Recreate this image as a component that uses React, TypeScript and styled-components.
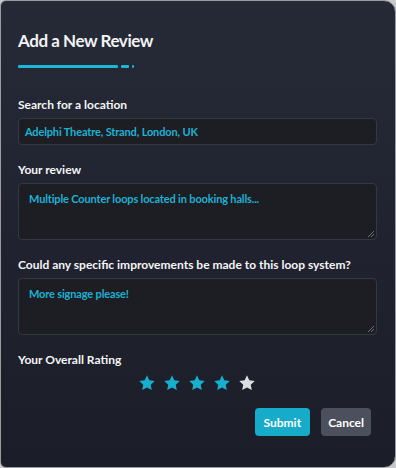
import React from "react";
import styled, { createGlobalStyle } from "styled-components";

const Global = createGlobalStyle`
  html, body { margin: 0; padding: 0; background: #c9cacc; }
  body { font-family: Lato, "Open Sans", sans-serif; }
  * { box-sizing: border-box; }
`;

const Card = styled.div`
  width: 396px;
  height: 468px;
  border: 1px solid #9a9ca1;
  border-radius: 6px 12px 12px 6px;
  background: linear-gradient(180deg, #262a37 0%, #1b1d28 100%);
  padding: 29px 18px 0 17px;
  display: flex;
  flex-direction: column;
  overflow: hidden;
`;

const Title = styled.h1`
  margin: 0;
  font-size: 17px;
  font-weight: 700;
  color: #f2f3f5;
  line-height: 22px;
  letter-spacing: -0.45px;
`;

const Divider = styled.div`
  display: flex;
  align-items: center;
  gap: 3px;
  margin: 13px 0 29px;
  height: 3px;
`;

const Seg = styled.span<{ $w: number }>`
  display: block;
  width: ${(p) => p.$w}px;
  height: 3px;
  border-radius: 1px;
  background: #1cb6d6;
`;

const Field = styled.div`
  display: flex;
  flex-direction: column;
  gap: 5px;
  margin-bottom: 17px;
`;

const Label = styled.label`
  font-size: 12px;
  font-weight: 700;
  color: #f4f5f7;
  line-height: 16px;
`;

const Input = styled.div`
  height: 27px;
  background: #1c1e24;
  border: 1px solid #343843;
  border-radius: 4px;
  padding: 0 6px;
  display: flex;
  align-items: center;
  font-size: 11px;
  font-weight: 700;
  color: #1eb1d2;
  letter-spacing: -0.15px;
`;

const Area = styled.div`
  position: relative;
  height: 57px;
  background: #1c1e24;
  border: 1px solid #343843;
  border-radius: 4px;
  padding: 7px 10px;
  font-size: 11px;
  font-weight: 700;
  color: #1eb1d2;
  line-height: 16px;
  letter-spacing: -0.15px;
`;

const Grip = styled.svg`
  position: absolute;
  right: 1px;
  bottom: 1px;
`;

const Stars = styled.div`
  display: flex;
  justify-content: center;
  gap: 7px;
  margin: 6px 0 0 -2px;
`;

const Actions = styled.div`
  display: flex;
  justify-content: flex-end;
  gap: 11px;
  margin: 16px 6px 0 0;
`;

const Button = styled.button<{ $primary?: boolean }>`
  height: 28px;
  padding: 0 ${(p) => (p.$primary ? 9 : 7)}px;
  border: none;
  border-radius: 4px;
  font-family: inherit;
  font-size: 12px;
  font-weight: 700;
  color: #ffffff;
  background: ${(p) => (p.$primary ? "#17abca" : "#4b505c")};
`;

const Star = ({ filled }: { filled: boolean }) => (
  <svg width="18" height="18" viewBox="0 0 24 24">
    <path
      d="M12 1.8l3.1 6.6 7.2.9-5.3 5 1.4 7.1L12 17.9l-6.4 3.5L7 14.3l-5.3-5 7.2-.9z"
      fill={filled ? "#16afcf" : "#dcdde0"}
    />
  </svg>
);

const ResizeGrip = () => (
  <Grip width="9" height="9" viewBox="0 0 9 9">
    <path d="M8 2L2 8M8 5L5 8" stroke="#6c707a" strokeWidth="1" />
  </Grip>
);

export default function App() {
  return (
    <>
      <Global />
      <Card>
        <Title>Add a New Review</Title>
        <Divider>
          <Seg $w={100} />
          <Seg $w={8} />
          <Seg $w={2} />
        </Divider>
        <Field>
          <Label>Search for a location</Label>
          <Input>Adelphi Theatre, Strand, London, UK</Input>
        </Field>
        <Field>
          <Label>Your review</Label>
          <Area>
            Multiple Counter loops located in booking halls...
            <ResizeGrip />
          </Area>
        </Field>
        <Field>
          <Label>Could any specific improvements be made to this loop system?</Label>
          <Area>
            More signage please!
            <ResizeGrip />
          </Area>
        </Field>
        <Label>Your Overall Rating</Label>
        <Stars>
          {[1, 2, 3, 4, 5].map((n) => (
            <Star key={n} filled={n <= 4} />
          ))}
        </Stars>
        <Actions>
          <Button $primary>Submit</Button>
          <Button>Cancel</Button>
        </Actions>
      </Card>
    </>
  );
}
